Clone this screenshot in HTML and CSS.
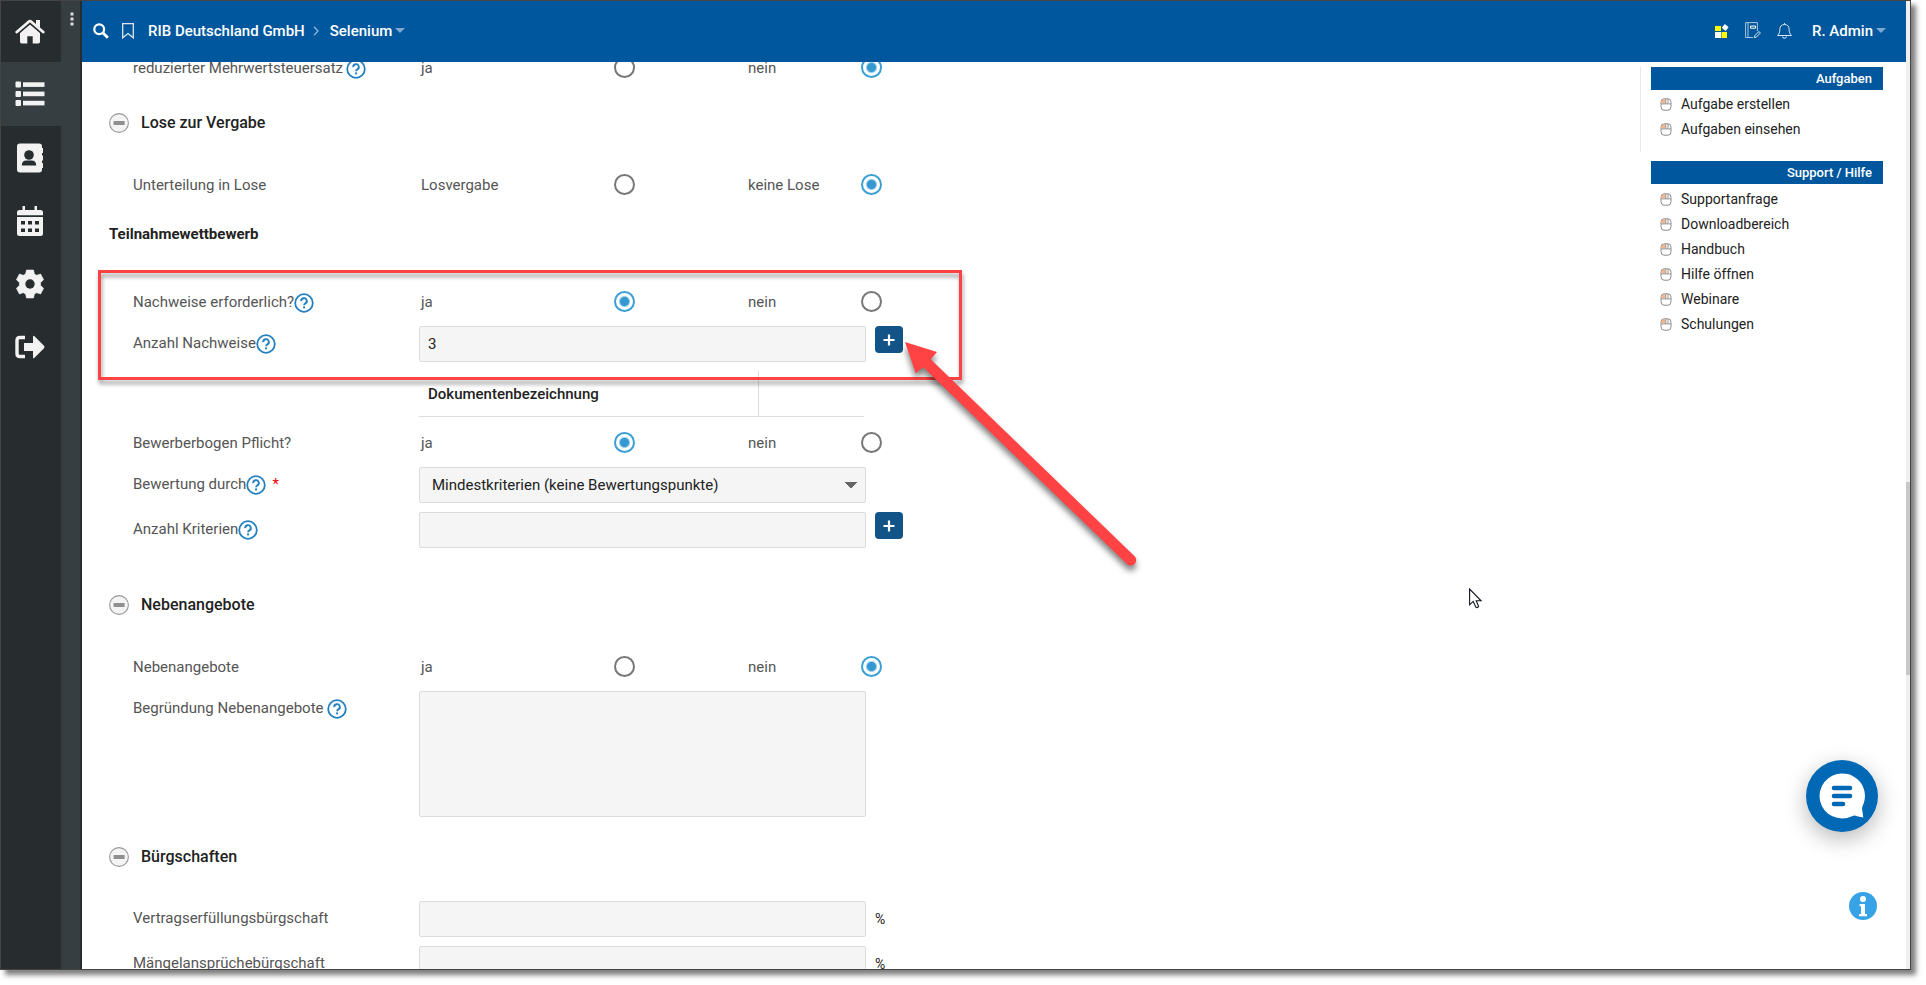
FILE: index.html
```html
<!DOCTYPE html>
<html lang="de">
<head>
<meta charset="utf-8">
<title>RIB Deutschland GmbH – Selenium</title>
<link rel="stylesheet" href="styles.css">
</head>
<body>
<svg class="sprite" aria-hidden="true">
  <symbol id="help" viewBox="0 0 20 20">
    <circle cx="10" cy="10" r="8.800" fill="none" stroke="#2481c0" stroke-width="1.800"/>
    <path d="M7.200 8.100a2.800 2.800 0 1 1 4.200 2.300c-.9.5-1.300.9-1.300 1.900" fill="none" stroke="#2481c0" stroke-width="1.900"/>
    <rect x="9.100" y="13.400" width="2" height="2" fill="#2481c0"/>
  </symbol>
  <symbol id="minus" viewBox="0 0 20 20">
    <circle cx="10" cy="10" r="9.400" fill="#f4f4f5" stroke="#999" stroke-width="1.100"/>
    <rect x="4.600" y="8" width="11" height="4" fill="#8f8f8f"/>
  </symbol>
  <symbol id="mouse" viewBox="0 0 12 13">
    <path d="M1 4.200Q1 .8 4 .8h4q3 0 3 3.400v4.300q0 3.700-3 3.700H4q-3 0-3-3.700z" fill="#fff" stroke="#8d8d8d"/>
    <path d="M1.500 5.500V4Q1.600 1.300 4 1.300h1.500v4.200z" fill="#f6b48a"/>
    <path d="M1 5.900h10M5.800 1v5M8 1v5" stroke="#8d8d8d" stroke-width=".9"/>
  </symbol>
  <symbol id="plus" viewBox="0 0 12 12">
    <path d="M6 .5v11M.5 6h11" stroke="#fff" stroke-width="2.200"/>
  </symbol>
</svg>

<div class="window">
  <nav class="rail" aria-label="Hauptnavigation">
    <a class="rail-link rail-home" href="#" aria-label="Start"><svg width="30" height="26" viewBox="0 0 30 26"><path d="M15 5.600 25 14v8.800q0 1.700-1.700 1.700h-5.600v-7.300h-5.400v7.300H6.700Q5 24.500 5 22.800V14z" fill="#f2f2f2"/><path d="M1.800 13 13.700 2.700q1.300-1.100 2.600 0L28.200 13" fill="none" stroke="#272c2e" stroke-width="5.400"/><path d="M1.800 13 13.700 2.700q1.300-1.100 2.600 0L28.200 13" fill="none" stroke="#f2f2f2" stroke-width="2.800" stroke-linecap="round"/><path d="M21 1h4v8l-4-3.600z" fill="#f2f2f2"/></svg></a>
    <a class="rail-link rail-active" href="#" aria-label="Liste"><svg width="30" height="26" viewBox="0 0 30 26" fill="#f2f2f2"><rect x="0.500" y="0.500" width="5.500" height="6" rx="1"/><rect x="0.500" y="10" width="5.500" height="6" rx="1"/><rect x="0.500" y="19" width="5.500" height="6" rx="1"/><rect x="8" y="1.300" width="21.500" height="4.600"/><rect x="8" y="10.600" width="21.500" height="4.600"/><rect x="8" y="19.800" width="21.500" height="4.600"/></svg></a>
    <a class="rail-link" href="#" aria-label="Adressbuch"><svg width="28" height="30" viewBox="0 0 28 30"><rect x="1" y="0.500" width="25" height="29" rx="3" fill="#f2f2f2"/><path d="M25 5h2v5h-2zM25 12.500h2v5h-2zM25 20h2v5h-2z" fill="#f2f2f2"/><circle cx="13" cy="12" r="4.800" fill="#272c2e"/><path d="M5.800 22.500q0-5 4.700-5h5q4.700 0 4.700 5z" fill="#272c2e"/></svg></a>
    <a class="rail-link" href="#" aria-label="Kalender"><svg width="28" height="30" viewBox="0 0 28 30"><path d="M1 9.300V6.500Q1 4 3.500 4h21Q27 4 27 6.500v2.800zM1 11h26v16.500q0 2.500-2.500 2.500h-21Q1 30 1 27.500zM6.500 0H9v5H6.500zM18.500 0H21v5h-2.500z" fill="#f2f2f2"/><path d="M5 15h4v3.500H5zM12 15h4v3.500h-4zM19 15h4v3.500h-4zM5 22.500h4V26H5zM12 22.500h4V26h-4zM19 22.500h4V26h-4z" fill="#272c2e"/></svg></a>
    <a class="rail-link" href="#" aria-label="Einstellungen"><svg width="28" height="30" viewBox="0 0 28 30"><path d="M10.500 1h7l.9 4 2.300 1.300 3.900-1.300 3 5.700-3 2.900v2.800l3 2.900-3 5.700-3.900-1.300-2.300 1.300-.9 4h-7l-.9-4-2.300-1.300L3.400 25l-3-5.700 3-2.900v-2.800l-3-2.900L3.400 5l3.900 1.300L9.600 5z" fill="#f2f2f2" stroke="#f2f2f2" stroke-linejoin="round" stroke-width=".6"/><circle cx="14" cy="15" r="4.700" fill="#272c2e"/></svg></a>
    <a class="rail-link" href="#" aria-label="Abmelden"><svg width="30" height="24" viewBox="0 0 30 24"><path d="M10 2.500H5Q2 2.500 2 5.500v13q0 3 3 3h5" fill="none" stroke="#f2f2f2" stroke-width="3.400"/><path d="M9 8h9V2q0-2 1.500-.7L29 10.800q1 1.200 0 2.400l-9.500 9.500Q18 24 18 22v-6H9z" fill="#f2f2f2"/></svg></a>
  </nav>
  <div class="strip">
    <button class="strip-toggle" type="button" aria-label="Menü"><svg width="4" height="14" viewBox="0 0 4 14" fill="#ddd"><rect x="0.500" y="0.500" width="3" height="3"/><rect x="0.500" y="5.500" width="3" height="3"/><rect x="0.500" y="10.500" width="3" height="3"/></svg></button>
  </div>

  <div class="page">
    <header class="topbar">
      <button class="icon-button" type="button" aria-label="Suche"><svg width="16" height="16" viewBox="0 0 16 16"><circle cx="6.200" cy="6.200" r="4.900" fill="none" stroke="#fff" stroke-width="2.200"/><path d="m9.800 9.800 5 5" stroke="#fff" stroke-width="2.800"/></svg></button>
      <button class="icon-button bookmark" type="button" aria-label="Lesezeichen"><svg width="12" height="16" viewBox="0 0 12 16"><path d="M.7.700h10.600v14.100L6 10.600.7 14.800z" fill="none" stroke="#dbe7f2" stroke-width="1.300"/></svg></button>
      <a class="crumb" href="#">RIB Deutschland GmbH</a>
      <svg class="crumb-arrow" width="6" height="10" viewBox="0 0 6 10"><path d="m1 .8 4 4.200-4 4.200" fill="none" stroke="#8fb5d6" stroke-width="1.300"/></svg>
      <button class="crumb menu" type="button">Selenium<span class="caret"></span></button>
      <div class="tools">
        <button class="icon-button" type="button" aria-label="Module"><svg width="14" height="14" viewBox="0 0 14 14"><path d="M0 2h6v5H0z" fill="#ff0"/><path d="M0 8h6v6H0z" fill="#fff"/><path d="M6.500 8H12v6H6.500z" fill="#ff0"/><rect x="7.700" y="1" width="5" height="5" rx=".8" fill="#fff" transform="rotate(40 10.200 3.500)"/></svg></button>
        <button class="icon-button" type="button" aria-label="Notizen"><svg width="16" height="17" viewBox="0 0 16 17" fill="none" stroke="#a9c6df"><path d="M8 15.500H.6V.6h11.800V9M3 .6v14.900"/><path d="M5.500 4h5v2.200h-5z" stroke="#fff"/><path d="m9.300 15.700.6-2.200 4-4 1.500 1.500-4 4z" stroke="#dbe7f2"/></svg></button>
        <button class="icon-button" type="button" aria-label="Benachrichtigungen"><svg width="15" height="16" viewBox="0 0 15 16" fill="none" stroke="#dbe7f2"><path d="M7.500 1.500c-3 0-4.600 2-4.600 4.700 0 3-.8 4.500-2.300 6.300h13.800c-1.500-1.800-2.300-3.300-2.300-6.300 0-2.700-1.600-4.700-4.600-4.700zM7.500 0v1.500M5.500 13.500q0 1.700 2 1.700t2-1.700"/></svg></button>
        <button class="crumb menu user" type="button">R. Admin<span class="caret"></span></button>
      </div>
    </header>

    <div class="body">
      <main class="form">
        <div class="row choice" role="group" aria-labelledby="name-mwst">
          <span class="name spaced" id="name-mwst">reduzierter Mehrwertsteuersatz<svg class="help"><use href="#help"/></svg></span>
          <span class="options">
            <label class="option">ja<input type="radio" name="mwst"></label>
            <label class="option">nein<input type="radio" name="mwst" checked></label>
          </span>
        </div>

        <h2 class="section"><button class="fold" type="button" aria-label="Einklappen"><svg width="20" height="20"><use href="#minus"/></svg></button>Lose zur Vergabe</h2>
        <div class="row choice" role="group" aria-labelledby="name-lose">
          <span class="name" id="name-lose">Unterteilung in Lose</span>
          <span class="options">
            <label class="option">Losvergabe<input type="radio" name="lose"></label>
            <label class="option">keine Lose<input type="radio" name="lose" checked></label>
          </span>
        </div>

        <h3 class="subsection">Teilnahmewettbewerb</h3>
        <div class="row choice" role="group" aria-labelledby="name-nachweise">
          <span class="name" id="name-nachweise">Nachweise erforderlich?<svg class="help"><use href="#help"/></svg></span>
          <span class="options">
            <label class="option">ja<input type="radio" name="nachweise" checked></label>
            <label class="option">nein<input type="radio" name="nachweise"></label>
          </span>
        </div>
        <div class="row">
          <label class="name" for="anzahl-nachweise">Anzahl Nachweise<svg class="help"><use href="#help"/></svg></label>
          <span class="control"><input class="field" id="anzahl-nachweise" type="text" value="3"><button class="add" type="button" aria-label="Hinzufügen"><svg width="12" height="12"><use href="#plus"/></svg></button></span>
        </div>
        <table class="documents">
          <thead><tr><th scope="col">Dokumentenbezeichnung</th><td></td></tr></thead>
        </table>
        <div class="row choice" role="group" aria-labelledby="name-bogen">
          <span class="name" id="name-bogen">Bewerberbogen Pflicht?</span>
          <span class="options">
            <label class="option">ja<input type="radio" name="bogen" checked></label>
            <label class="option">nein<input type="radio" name="bogen"></label>
          </span>
        </div>
        <div class="row">
          <label class="name" for="bewertung">Bewertung durch<svg class="help"><use href="#help"/></svg><span class="required">*</span></label>
          <span class="control"><select class="field" id="bewertung"><option>Mindestkriterien (keine Bewertungspunkte)</option></select></span>
        </div>
        <div class="row">
          <label class="name" for="anzahl-kriterien">Anzahl Kriterien<svg class="help"><use href="#help"/></svg></label>
          <span class="control"><input class="field" id="anzahl-kriterien" type="text"><button class="add" type="button" aria-label="Hinzufügen"><svg width="12" height="12"><use href="#plus"/></svg></button></span>
        </div>

        <h2 class="section section-far"><button class="fold" type="button" aria-label="Einklappen"><svg width="20" height="20"><use href="#minus"/></svg></button>Nebenangebote</h2>
        <div class="row choice" role="group" aria-labelledby="name-neben">
          <span class="name" id="name-neben">Nebenangebote</span>
          <span class="options">
            <label class="option">ja<input type="radio" name="neben"></label>
            <label class="option">nein<input type="radio" name="neben" checked></label>
          </span>
        </div>
        <div class="row">
          <label class="name spaced" for="begruendung">Begründung Nebenangebote<svg class="help"><use href="#help"/></svg></label>
          <span class="control"><textarea class="field area" id="begruendung"></textarea></span>
        </div>

        <h2 class="section"><button class="fold" type="button" aria-label="Einklappen"><svg width="20" height="20"><use href="#minus"/></svg></button>Bürgschaften</h2>
        <div class="row">
          <label class="name" for="vertrag">Vertragserfüllungsbürgschaft</label>
          <span class="control"><input class="field" id="vertrag" type="text"><span class="unit">%</span></span>
        </div>
        <div class="row">
          <label class="name" for="maengel">Mängelansprüchebürgschaft</label>
          <span class="control"><input class="field" id="maengel" type="text"><span class="unit">%</span></span>
        </div>
      </main>

      <aside class="side">
        <section class="box box-tasks">
          <h2 class="box-title">Aufgaben</h2>
          <ul class="links">
            <li><a href="#"><svg class="mouse"><use href="#mouse"/></svg>Aufgabe erstellen</a></li>
            <li><a href="#"><svg class="mouse"><use href="#mouse"/></svg>Aufgaben einsehen</a></li>
          </ul>
        </section>
        <section class="box">
          <h2 class="box-title">Support / Hilfe</h2>
          <ul class="links links-support">
            <li><a href="#"><svg class="mouse"><use href="#mouse"/></svg>Supportanfrage</a></li>
            <li><a href="#"><svg class="mouse"><use href="#mouse"/></svg>Downloadbereich</a></li>
            <li><a href="#"><svg class="mouse"><use href="#mouse"/></svg>Handbuch</a></li>
            <li><a href="#"><svg class="mouse"><use href="#mouse"/></svg>Hilfe öffnen</a></li>
            <li><a href="#"><svg class="mouse"><use href="#mouse"/></svg>Webinare</a></li>
            <li><a href="#"><svg class="mouse"><use href="#mouse"/></svg>Schulungen</a></li>
          </ul>
        </section>
      </aside>
    </div>
  </div>
  <div class="scrollbar"><div class="thumb"></div></div>

  <button class="chat" type="button" aria-label="Chat"><svg width="48" height="48" viewBox="0 0 48 48"><path d="M24 1.500a22.500 22.500 0 1 0 10 42.700q2.500-1.200 5 0l6.300 1.300-1-7q-.6-2.500.4-4.700A22.500 22.500 0 0 0 24 1.500z" fill="#fff"/><path d="M16 16h16M16 24h16M16 32h9" stroke="#0068b4" stroke-width="4.600" stroke-linecap="round"/></svg></button>
  <button class="info" type="button" aria-label="Information"><svg width="28" height="28" viewBox="0 0 28 28"><circle cx="14" cy="14" r="14" fill="#37a3e6"/><circle cx="14" cy="7" r="3" fill="#fff"/><path d="M10.500 12H16v10h2v2.300h-8V22h2v-7.700h-1.500z" fill="#fff"/></svg></button>
</div>

<div class="highlight"></div>
<svg class="arrow" width="250" height="250" viewBox="0 0 250 250"><path d="M5 2 37 12 30.700 19.300 234.600 216.200a5.400 5.400 0 0 1-7.600 7.800L23.300 27.300 15.700 33.300z" fill="#ff4344"/></svg>
<svg class="pointer" width="14" height="21" viewBox="0 0 14 21"><path d="M.6 1v15.800l3.600-3.400 2.700 5.800q1.500 1 2.700-.8L7.200 12.800h4.900z" fill="#fff" stroke="#10131f" stroke-width="1.100"/></svg>
</body>
</html>
```
FILE: styles.css
```css
* {
  box-sizing: border-box;
}

body {
  margin: 0;
  padding: 0 15px 15px 0;
  height: 100vh;
  overflow: hidden;
  position: relative;
  background: #fff;
  color: #222;
  font: 15px/20px Roboto, "Liberation Sans", sans-serif;
}

button, input, select, textarea {
  font: inherit;
  color: inherit;
}

button {
  border: 0;
  padding: 0;
  background: none;
  cursor: pointer;
}

a {
  color: inherit;
  text-decoration: none;
}

svg {
  display: block;
  flex: none;
}

.sprite {
  position: absolute;
  width: 0;
  height: 0;
}

.window {
  position: relative;
  display: flex;
  height: 100%;
  border: 1px solid #444;
  background: #fff;
  box-shadow: 5px 5px 5px rgba(0, 0, 0, 0.5);
}

/* Left navigation */
.rail {
  flex: none;
  width: 60px;
  background: #272c2e;
}

.rail-link {
  display: flex;
  align-items: center;
  justify-content: center;
  height: 63px;
  padding-right: 3px;
}

.rail-home {
  height: 61px;
}

.rail-active {
  height: 64px;
  background: #363e41;
}

.strip {
  flex: none;
  width: 21px;
  padding: 10px 0 0 9px;
  background: #363e41;
  border-right: 2px solid #272c2e;
}

/* Header */
.page {
  flex: 1;
  min-width: 0;
  display: flex;
  flex-direction: column;
}

.topbar {
  flex: none;
  display: flex;
  align-items: center;
  height: 61px;
  padding: 0 20px 2px 11px;
  background: #00579d;
  color: #fff;
}

.bookmark {
  margin: 0 14px 0 13px;
}

.crumb {
  font-size: 15px;
  font-weight: 500;
}

.crumb-arrow {
  margin: 0 11px 0 8px;
}

.menu {
  display: flex;
  align-items: center;
  gap: 3px;
}

.caret {
  border: 5px solid transparent;
  border-top-color: #7da9d0;
  border-bottom: 0;
}

.tools {
  display: flex;
  align-items: center;
  gap: 16px;
  margin-left: auto;
}

.user {
  margin-left: 4px;
}

/* Form */
.body {
  flex: 1;
  min-height: 0;
  display: flex;
  overflow: hidden;
}

.form {
  flex: 1;
  margin-top: -12px;
  padding-left: 27px;
}

.row {
  display: grid;
  grid-template-columns: 286px 1fr;
  align-items: start;
  margin: 0 0 9px 24px;
}

.name {
  display: flex;
  align-items: center;
  padding-top: 7px;
  color: #555;
}

.spaced {
  gap: 3px;
}

.help {
  width: 20px;
  height: 20px;
  margin: 1px 0 -1px;
}

.required {
  margin-left: 6px;
  color: #e00;
}

.choice {
  min-height: 33px;
  padding-top: 2px;
  align-content: center;
  align-items: center;
}

.choice .name {
  padding: 0;
}

.options {
  display: grid;
  grid-template-columns: 214px 134px;
  gap: 113px;
  padding-left: 2px;
}

.option {
  display: flex;
  align-items: center;
  justify-content: space-between;
  color: #555;
}

.option input {
  appearance: none;
  width: 21px;
  height: 21px;
  margin: 0;
  border: 2px solid #777;
  border-radius: 50%;
  background: #fff;
}

.option input:checked {
  border-color: #3a9fd4;
  background: radial-gradient(circle, #3399d0 4px, #fff 6px);
}

.control {
  display: flex;
  align-items: flex-start;
  gap: 9px;
}

.field {
  width: 447px;
  height: 36px;
  padding: 0 8px;
  border: 1px solid #dcdcdc;
  border-radius: 2px;
  background: #f5f5f5;
}

select.field {
  appearance: none;
  padding-left: 12px;
  background-image:
    linear-gradient(to top right, transparent 48%, #666 50%),
    linear-gradient(to top left, transparent 48%, #666 50%);
  background-size: 6px 6px;
  background-position: right 14px center, right 8px center;
  background-repeat: no-repeat;
}

.area {
  height: 126px;
  resize: none;
}

.add {
  display: flex;
  align-items: center;
  justify-content: center;
  width: 28px;
  height: 27px;
  border-radius: 4px;
  background: #125487;
}

.unit {
  padding-top: 8px;
  font-size: 14px;
}

.section {
  display: flex;
  align-items: center;
  gap: 12px;
  min-height: 32px;
  margin: 24px 0 28px;
  font-size: 16px;
  font-weight: 500;
}

.section-far {
  margin-top: 41px;
}

.subsection {
  margin: 18px 0 34px;
  font-size: 15px;
  font-weight: 700;
  line-height: 32px;
}

.documents {
  width: 445px;
  height: 46px;
  margin: 0 0 8px 310px;
  border-collapse: collapse;
  border-bottom: 1px solid #ddd;
}

.documents th {
  width: 339px;
  padding: 0 9px;
  border-right: 1px solid #ddd;
  font-weight: 500;
  text-align: left;
}

/* Right column */
.side {
  flex: none;
  width: 266px;
  padding: 5px 23px 0 0;
  font-size: 14px;
}

.box {
  margin-bottom: 9px;
  padding-left: 11px;
}

.box-tasks {
  padding: 0 0 10px 10px;
  border-left: 1px solid #e8e8e8;
}

.box-title {
  margin: 0;
  padding-right: 11px;
  background: #00579d;
  color: #fff;
  font-size: 13px;
  font-weight: 500;
  line-height: 23px;
  text-align: right;
}

.links {
  margin: 2px 0 0;
  padding: 0 0 0 9px;
  list-style: none;
}

.links-support {
  margin-top: 3px;
}

.links a {
  display: flex;
  align-items: center;
  gap: 9px;
  line-height: 25px;
}

.mouse {
  width: 12px;
  height: 13px;
}

.scrollbar {
  flex: none;
  width: 4px;
  padding-top: 481px;
  background: #f0f0f0;
}

.thumb {
  height: 193px;
  background: #c8c8c8;
}

/* Floating buttons */
.chat {
  position: absolute;
  right: 32px;
  bottom: 137px;
  display: flex;
  align-items: center;
  justify-content: center;
  width: 72px;
  height: 72px;
  border-radius: 50%;
  background: #0068b4;
  box-shadow: 0 7px 22px rgba(0, 0, 0, 0.28);
}

.info {
  position: absolute;
  right: 33px;
  bottom: 49px;
}

/* Annotations over the page */
.highlight {
  position: absolute;
  left: 98px;
  top: 270px;
  width: 864px;
  height: 110px;
  border: 3px solid #ff4344;
  filter: drop-shadow(1px 4px 2px rgba(0, 0, 0, 0.4));
  pointer-events: none;
}

.arrow {
  position: absolute;
  left: 900px;
  top: 340px;
  filter: drop-shadow(0 5px 3px rgba(0, 0, 0, 0.5));
  pointer-events: none;
}

.pointer {
  position: absolute;
  left: 1469px;
  top: 588px;
  pointer-events: none;
}
```
